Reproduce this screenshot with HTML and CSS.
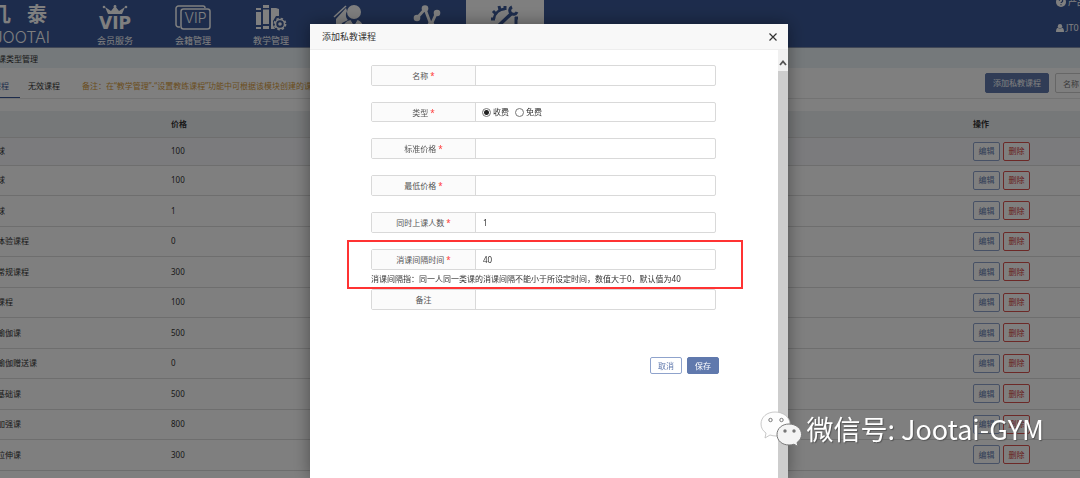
FILE: index.html
```html
<!DOCTYPE html>
<html lang="zh-CN">
<head>
  <meta charset="UTF-8" />
  <title>私教课类型管理</title>
  <link rel="stylesheet" href="styles.css">
</head>
<body>

  <div class="page">
    <header class="header">
      <div class="logo">
        <div class="logo-cn"><span>几</span><span>泰</span></div>
        <div class="logo-en">JOOTAI</div>
      </div>
      <nav class="nav">
        <a href="#" class="nav-item">
          <svg width="36" height="28" viewBox="0 0 36 28" fill="currentColor">
            <path d="M8 2l6 4 4-5 4 5 6-4-3 7H11z"/>
            <circle cx="7" cy="2" r="1.3"/><circle cx="18" cy="1.4" r="1.4"/><circle cx="29" cy="2" r="1.3"/>
            <text x="18" y="24" text-anchor="middle" class="vip-bold">VIP</text>
          </svg>
          <span>会员服务</span>
        </a>
        <a href="#" class="nav-item">
          <svg width="36" height="28" viewBox="0 0 36 28" fill="none" stroke="currentColor" stroke-width="1.5">
            <path d="M5 22H3.500a2.500 2.500 0 0 1-2.500-2.500V3.500A2.500 2.500 0 0 1 3.500 1H28a2 2 0 0 1 2 2"/>
            <rect x="6" y="4" width="29" height="20" rx="2.500"/>
            <text x="20.500" y="18" text-anchor="middle" class="vip-thin">VIP</text>
          </svg>
          <span>会籍管理</span>
        </a>
        <a href="#" class="nav-item">
          <svg width="32" height="28" viewBox="0 0 32 28" fill="currentColor">
            <path d="M1 3h5v2H1zM1 7h5v13H1zM1 22h5v2H1zM8 0h6v3H8zM8 4.500h6V19H8zM8 21h6v3H8zM16 3h5l3 1v7h-3l-3 5v4l2 4h-4z"/>
            <circle cx="25" cy="19" r="4.500" fill="none" stroke="currentColor" stroke-width="1.500"/>
            <circle cx="25" cy="19" r="5.600" fill="none" stroke="currentColor" stroke-width="1.600" stroke-dasharray="2.400 2"/>
            <circle cx="25" cy="19" r="1.800"/>
          </svg>
          <span>教学管理</span>
        </a>
        <a href="#" class="nav-item">
          <svg width="32" height="28" viewBox="0 0 32 28" fill="currentColor">
            <path d="M3 14L13 3l1 3c-2 4-1 7 1 9l-6 3-2 6H3z"/>
            <path d="M1 12L13 1" stroke="currentColor" stroke-width="1.500"/>
            <circle cx="21" cy="7" r="7"/>
            <path d="M9 28c0-8 3-12 9-13l3 5 3-5c5 1 7 6 7 13z"/>
            <path d="M18 15l3 5 3-5" fill="none" stroke="#3b5998"/>
          </svg>
        </a>
        <a href="#" class="nav-item">
          <svg width="28" height="28" viewBox="0 0 28 28" fill="currentColor">
            <path d="M4 13L12 4l6 16 5-11" fill="none" stroke="currentColor" stroke-width="2.800"/>
            <circle cx="4" cy="13" r="3.300"/><circle cx="12" cy="3.500" r="3.300"/>
            <circle cx="18" cy="20" r="3.300"/><circle cx="24" cy="8" r="3.300"/>
          </svg>
        </a>
        <a href="#" class="nav-item active">
          <svg width="30" height="28" viewBox="0 0 30 28" fill="none" stroke="currentColor">
            <path d="M4 14a11 11 0 0 1 11-10" stroke-width="2.500"/>
            <path d="M6 9L3 6M10 5L9 1M15 5V1M5 14H1" stroke-width="3"/>
            <path d="M22 2a3.800 3.800 0 1 0 5 5" stroke-width="3"/>
            <path d="M21 9L5 24" stroke-width="3.500"/>
            <path d="M26 12v8M25 13h3" stroke-width="3"/>
          </svg>
        </a>
      </nav>
      <div class="account">
        <a href="#">
          <svg width="10" height="10" viewBox="0 0 10 10"><circle cx="5" cy="5" r="5" fill="currentColor"/><path d="M3.400 3.800a1.600 1.600 0 1 1 2.400 1.300c-.6.300-.8.500-.8 1M5 7.200v1" fill="none" stroke="#3b5998" stroke-width="1.200"/></svg>
          <span>产品</span>
        </a>
        <a href="#">
          <svg width="8" height="8" viewBox="0 0 8 8" fill="currentColor"><circle cx="4" cy="2.200" r="2.200"/><path d="M0 8c0-3 1-4 2-4.200 1 1.200 3 1.200 4 0C7 4 8 5 8 8z"/></svg>
          <span>JT0</span>
        </a>
      </div>
    </header>

    <div class="crumb">教课类型管理</div>

    <div class="toolbar">
      <a href="#" class="tab active">课程</a>
      <a href="#" class="tab">无效课程</a>
      <p class="remark">备注：在“教学管理”-“设置教练课程”功能中可根据该模块创建的课程给</p>
      <div class="search">
        <button type="button" class="btn btn-primary btn-add">添加私教课程</button>
        <input type="text" class="search-input" placeholder="名称" aria-label="名称">
      </div>
    </div>

    <table class="list">
      <thead>
        <tr><th class="col-name"></th><th>价格</th><th class="col-action">操作</th></tr>
      </thead>
      <tbody>
        <tr class="hover"><td>球</td><td>100</td><td><button class="btn btn-edit">编辑</button><button class="btn btn-del">删除</button></td></tr>
        <tr><td>球</td><td>100</td><td><button class="btn btn-edit">编辑</button><button class="btn btn-del">删除</button></td></tr>
        <tr><td>球</td><td>1</td><td><button class="btn btn-edit">编辑</button><button class="btn btn-del">删除</button></td></tr>
        <tr><td>体验课程</td><td>0</td><td><button class="btn btn-edit">编辑</button><button class="btn btn-del">删除</button></td></tr>
        <tr><td>常规课程</td><td>300</td><td><button class="btn btn-edit">编辑</button><button class="btn btn-del">删除</button></td></tr>
        <tr><td>课程</td><td>100</td><td><button class="btn btn-edit">编辑</button><button class="btn btn-del">删除</button></td></tr>
        <tr><td>瑜伽课</td><td>500</td><td><button class="btn btn-edit">编辑</button><button class="btn btn-del">删除</button></td></tr>
        <tr><td>瑜伽赠送课</td><td>0</td><td><button class="btn btn-edit">编辑</button><button class="btn btn-del">删除</button></td></tr>
        <tr><td>基础课</td><td>500</td><td><button class="btn btn-edit">编辑</button><button class="btn btn-del">删除</button></td></tr>
        <tr><td>加强课</td><td>800</td><td><button class="btn btn-edit">编辑</button><button class="btn btn-del">删除</button></td></tr>
        <tr><td>拉伸课</td><td>300</td><td><button class="btn btn-edit">编辑</button><button class="btn btn-del">删除</button></td></tr>
      </tbody>
    </table>
  </div>

  <div class="mask">
    <div class="dialog" role="dialog" aria-labelledby="dialog-title">
      <div class="dialog-head">
        <span id="dialog-title">添加私教课程</span>
        <button type="button" class="close" aria-label="关闭">
          <svg width="8" height="8" viewBox="0 0 8 8" stroke="#333" stroke-width="1.200"><path d="M.5.5l7 7M7.500.5l-7 7"/></svg>
        </button>
      </div>
      <div class="dialog-main">
        <form class="form">
          <div class="field">
            <label for="name">名称<i>*</i></label>
            <input type="text" id="name">
          </div>
          <div class="field field-radio" role="radiogroup" aria-labelledby="type-label">
            <span class="label" id="type-label">类型<i>*</i></span>
            <div class="radios">
              <label><input type="radio" name="type" checked>收费</label>
              <label><input type="radio" name="type">免费</label>
            </div>
          </div>
          <div class="field">
            <label for="price">标准价格<i>*</i></label>
            <input type="text" id="price">
          </div>
          <div class="field">
            <label for="min-price">最低价格<i>*</i></label>
            <input type="text" id="min-price">
          </div>
          <div class="field">
            <label for="people">同时上课人数<i>*</i></label>
            <input type="text" id="people" value="1">
          </div>
          <div class="marked">
            <div class="field">
              <label for="interval">消课间隔时间<i>*</i></label>
              <input type="text" id="interval" value="40">
            </div>
            <p class="hint">消课间隔指：同一人同一类课的消课间隔不能小于所设定时间，数值大于0，默认值为40</p>
          </div>
          <div class="field">
            <label for="memo">备注</label>
            <input type="text" id="memo">
          </div>
          <div class="actions">
            <button type="button" class="btn btn-cancel">取消</button>
            <button type="button" class="btn btn-primary">保存</button>
          </div>
        </form>
        <div class="scrollbar">
          <svg width="8" height="6" viewBox="0 0 8 6" fill="none" stroke="#555" stroke-width="1.800"><path d="M1 5l3-3.500L7 5"/></svg>
          <div class="thumb"></div>
        </div>
      </div>
    </div>
  </div>

  <div class="watermark">
    <svg width="42" height="36" viewBox="0 0 42 36">
      <path d="M15 1C7 1 1 6 1 13c0 4 2 7 5 9l-1 5 5-3c2 .7 4 1 6 1 8 0 14-5 14-12S23 1 15 1z" fill="#fdfdfd" stroke="#bbb" stroke-width=".8"/>
      <path d="M29 13c-7 0-12 4.500-12 10.500S22 34 29 34c2 0 3-.3 5-.8l4 2.300-1-4c3-2 4.500-5 4.500-8C41.500 17.500 36 13 29 13z" fill="#f4f4f4" stroke="#777" stroke-width="1"/>
      <g fill="#fff" stroke="#777"><circle cx="10.500" cy="9" r="1.700"/><circle cx="21.500" cy="9" r="1.700"/></g>
      <g fill="#777"><circle cx="25" cy="20" r="1.700"/><circle cx="34" cy="20" r="1.700"/></g>
    </svg>
    <span>微信号: Jootai-GYM</span>
  </div>

</body>
</html>
```
FILE: styles.css
```css
* {
  box-sizing: border-box;
}
body {
  margin: 0;
  overflow: hidden;
  background: #fff;
  color: #333;
  font-family: "Noto Sans", "Noto Sans CJK SC", sans-serif;
  font-size: 8px;
  line-height: 12px;
}
a {
  color: inherit;
  text-decoration: none;
}
p {
  margin: 0;
}
button,
input {
  font-family: inherit;
  font-size: 8px;
  line-height: 12px;
  color: inherit;
}
.page {
  margin-left: -10px;
  overflow: hidden;
}

/* header */
.header {
  display: flex;
  height: 48px;
  overflow: hidden;
  background: #3b5998;
  border-bottom: 1px solid #8391ae;
  color: #fff;
}
.logo {
  display: flex;
  flex-direction: column;
  align-items: flex-end;
  width: 60px;
  margin-right: 26px;
}
.logo-cn {
  display: flex;
  gap: 16px;
  height: 28px;
  padding-right: 3px;
  font-size: 20px;
  font-weight: bold;
  line-height: 30px;
}
.logo-en {
  font-family: Inter, sans-serif;
  font-size: 16px;
  font-weight: 300;
  line-height: 18px;
}
.nav {
  display: flex;
  flex: 1;
}
.nav-item {
  display: flex;
  flex-direction: column;
  align-items: center;
  width: 78px;
  padding-top: 5px;
  font-size: 9px;
}
.nav-item svg {
  margin-bottom: 2px;
}
.nav-item.active {
  background: #fff;
  color: #3b5998;
}
.vip-bold {
  font-family: "DejaVu Sans", sans-serif;
  font-size: 17px;
  font-weight: bold;
}
.vip-thin {
  font-family: Inter, sans-serif;
  font-size: 14px;
  font-weight: 300;
  fill: currentColor;
  stroke: none;
}
.account {
  display: flex;
  flex-direction: column;
  gap: 14px;
  width: 24px;
  margin-top: -4px;
  font-size: 9px;
  white-space: nowrap;
}
.account a {
  display: flex;
  align-items: center;
  gap: 2px;
}
.account svg {
  flex: none;
}

/* toolbar */
.crumb {
  height: 20px;
  background: #ebf2f6;
  line-height: 22px;
}
.toolbar {
  display: flex;
  height: 31px;
  border-bottom: 1px solid #e6e6e6;
  line-height: 36px;
}
.tab {
  padding: 0 8px;
}
.tab.active {
  padding: 0 11px 0 3px;
  border-bottom: 1px solid #3b5998;
  color: #3b5998;
}
.remark {
  flex: 1;
  width: 0;
  margin-left: 14px;
  overflow: hidden;
  color: #d69a3a;
  white-space: nowrap;
}
.search {
  display: flex;
  align-items: center;
  gap: 6px;
  width: 95px;
}
.search-input {
  flex: none;
  width: 100px;
  height: 20px;
  padding: 0 7px;
  border: 1px solid #ccc;
  border-radius: 2px;
}
.btn {
  padding: 0;
  border: 1px solid;
  border-radius: 2px;
  background: #fff;
  cursor: pointer;
}
.btn-primary {
  border-color: #6079ad;
  background: #6079ad;
  color: #fff;
}
.btn-add {
  flex: none;
  width: 64px;
  height: 20px;
}

/* course list */
.list {
  width: 100%;
  margin-top: 12px;
  border-collapse: collapse;
  table-layout: fixed;
}
.list th,
.list td {
  height: 31px;
  padding: 0;
  border-bottom: 1px solid #ddd;
  text-align: left;
}
.list td:first-child {
  padding-left: 7px;
}
.list tr:nth-child(even) td {
  height: 30px;
}
.list thead th {
  height: 26px;
  background: #edf0f2;
}
.list .hover td {
  height: 28px;
  background: #f6f7fb;
}
.col-name {
  width: 181px;
}
.col-action {
  width: 107px;
}
.btn-edit,
.btn-del {
  width: 27px;
  height: 19px;
  margin-right: 3px;
  vertical-align: middle;
}
.btn-edit {
  border-color: #8fa3cc;
  color: #6079ad;
}
.btn-del {
  border-color: #d9534f;
  color: #d03a3a;
}

/* dialog */
.mask {
  position: fixed;
  inset: 0;
  display: flex;
  justify-content: center;
  padding: 24px 0 0 18px;
  background: rgba(0, 0, 0, 0.5);
}
.dialog {
  display: flex;
  flex-direction: column;
  width: 478px;
  background: #fff;
  box-shadow: 0 0 16px rgba(0, 0, 0, 0.4);
}
.dialog-head {
  display: flex;
  align-items: center;
  justify-content: space-between;
  height: 26px;
  padding: 0 11px 0 12px;
  border-bottom: 1px solid #eee;
  background: #f8f8f8;
  font-size: 9px;
}
.close {
  display: flex;
  padding: 0;
  border: 0;
  background: none;
  cursor: pointer;
}
.dialog-main {
  display: flex;
  flex: 1;
}
.form {
  flex: 1;
  padding: 15px 59px 0 61px;
}
.field {
  display: flex;
  height: 21px;
  margin: 0 3px 16px 0;
  border: 1px solid #d9d9d9;
  border-radius: 2px;
}
.field-radio {
  height: 20px;
}
.field > label,
.field > .label {
  width: 104px;
  border-right: 1px solid #d9d9d9;
  background: #fbfbfb;
  color: #555;
  line-height: 19px;
  text-align: center;
}
.field i {
  margin-left: 2px;
  color: #f33;
  font-style: normal;
}
.field > input {
  flex: 1;
  min-width: 0;
  padding: 0 7px;
  border: 0;
  background: none;
}
.radios {
  display: flex;
  align-items: center;
  gap: 6px;
  padding-left: 6px;
}
.radios label {
  display: flex;
  align-items: center;
  gap: 2px;
}
.radios input {
  width: 9px;
  height: 9px;
  margin: 0;
  border: 1px solid #777;
  border-radius: 50%;
  appearance: none;
}
.radios input:checked {
  background: radial-gradient(#222 0 2px, #fff 3px);
}
.marked {
  position: relative;
}
.marked::after {
  content: "";
  position: absolute;
  inset: -9px -24px 0;
  border: 2px solid #f33;
  pointer-events: none;
}
.marked .field {
  margin-bottom: 0;
}
.hint {
  height: 19px;
  line-height: 18px;
  white-space: nowrap;
}
.actions {
  display: flex;
  justify-content: flex-end;
  gap: 5px;
  margin-top: 47px;
}
.actions .btn {
  width: 32px;
  height: 17px;
}
.btn-cancel {
  border-color: #8fa3cc;
  color: #6079ad;
}
.scrollbar {
  display: flex;
  flex-direction: column;
  align-items: center;
  width: 10px;
  background: #f0f0f0;
}
.scrollbar svg {
  margin: 10px 0 5px;
}
.thumb {
  flex: 1;
  width: 100%;
  background: #cdcdcd;
}

.watermark {
  position: fixed;
  right: 36px;
  bottom: 31px;
  display: flex;
  align-items: center;
  gap: 4px;
  color: #fff;
  font-family: "Noto Sans CJK SC", sans-serif;
  font-size: 27px;
  line-height: 36px;
  text-shadow: 1px 1px 1px #555;
}
```
